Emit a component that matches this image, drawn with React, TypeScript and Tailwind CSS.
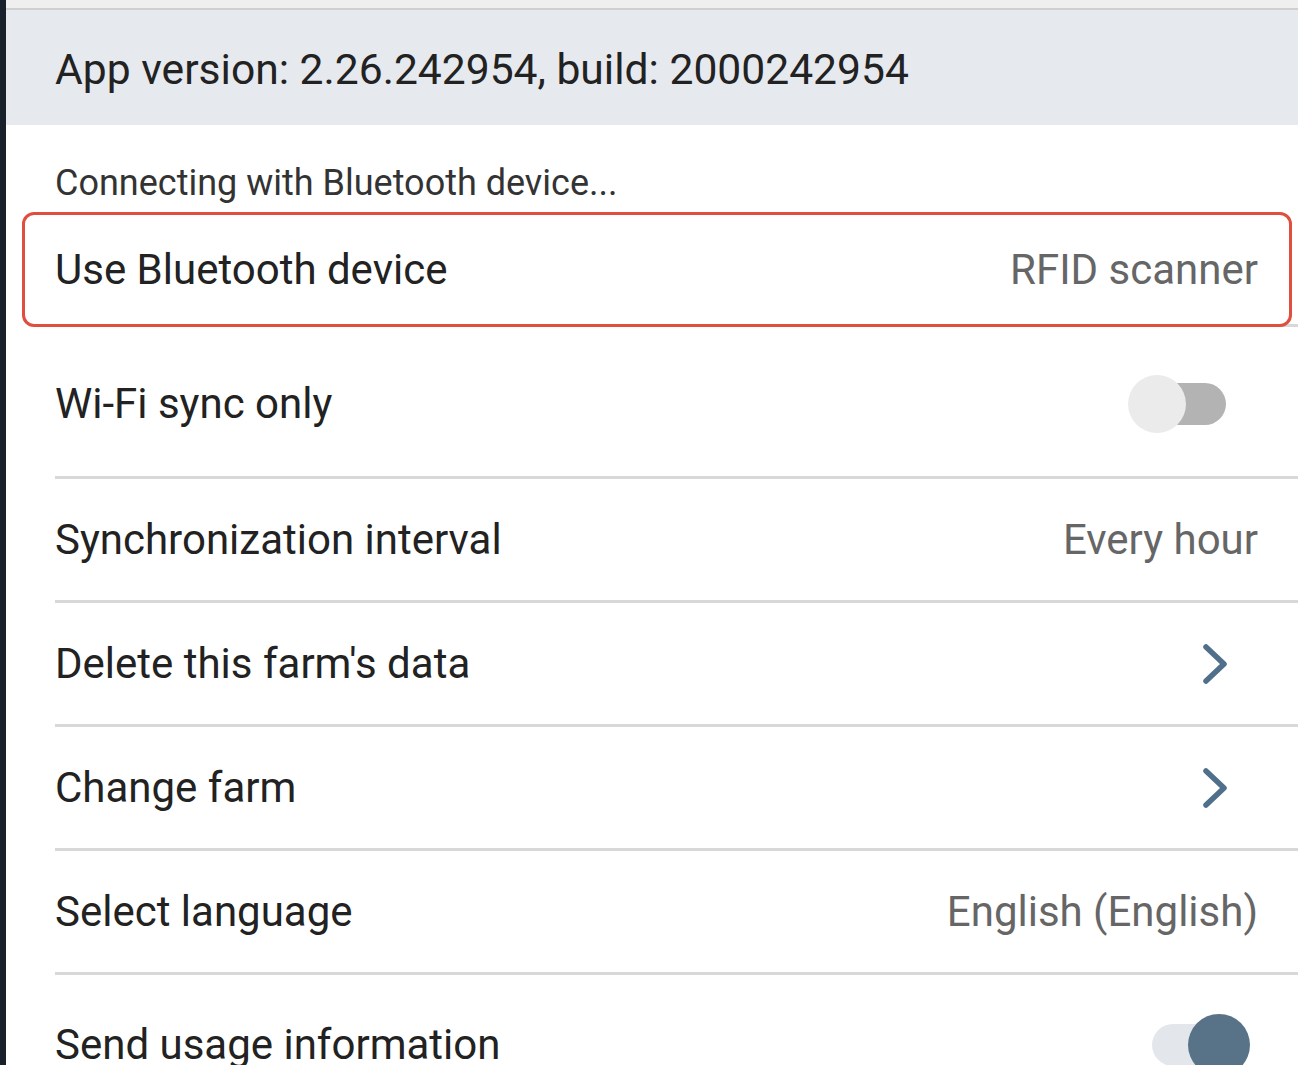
import React from 'react';

const font = { fontFamily: 'Roboto, "Noto Sans", Arial, sans-serif' };

function Chevron() {
  return (
    <svg width="30" height="46" viewBox="0 0 30 46" className="mr-[68px]">
      <path d="M6 6 L24 23 L6 40" fill="none" stroke="#4f6f8a" strokeWidth="5.5" strokeLinecap="round" strokeLinejoin="round" />
    </svg>
  );
}

function Toggle({ on }: { on: boolean }) {
  if (on) {
    return (
      <div className="flex items-center mr-[48px]">
        <div className="w-[78px] h-[42px] rounded-full bg-[#e3e7ec]" />
        <div className="w-[62px] h-[62px] rounded-full bg-[#587387] -ml-[42px]" />
      </div>
    );
  }
  return (
    <div className="flex items-center mr-[72px]">
      <div className="w-[58px] h-[58px] rounded-full bg-[#ebebeb] z-10" />
      <div className="w-[70px] h-[42px] rounded-r-full bg-[#b3b3b3] -ml-[30px]" />
    </div>
  );
}

function Divider() {
  return <div className="h-[3px] ml-[49px] bg-[#d8d8d8]" />;
}

function Label({ children }: { children: React.ReactNode }) {
  return <span className="text-[42px] text-[#222] leading-none">{children}</span>;
}

function Value({ children }: { children: React.ReactNode }) {
  return <span className="text-[42px] text-[#666] leading-none mr-[40px]">{children}</span>;
}

export default function App() {
  return (
    <div className="flex w-full h-[1065px] overflow-hidden bg-white" style={font}>
      <div className="w-[6px] bg-[#18202c] shrink-0" />
      <div className="flex-1 min-w-0">
        <div className="h-[8px] bg-[#efefef]" />
        <div className="h-[2px] bg-[#cfcfcf]" />
        <div className="h-[115px] bg-[#e6e9ee] flex items-center pl-[49px] pt-[4px]">
          <span className="text-[42.6px] text-[#222] leading-none">App version: 2.26.242954, build: 2000242954</span>
        </div>
        <div className="h-[87px] flex items-center pt-[28px] pl-[49px]">
          <span className="text-[36px] text-[#333] leading-none">Connecting with Bluetooth device...</span>
        </div>
        <div className="relative z-10 bg-white ml-[16px] mr-[6px] h-[115px] border-[3px] border-[#e04e3f] rounded-[12px] flex items-center justify-between pl-[30px] pr-[31px]">
          <Label>Use Bluetooth device</Label>
          <span className="text-[42px] text-[#666] leading-none">RFID scanner</span>
        </div>
        <div className="h-[3px] -mt-[3px] ml-[49px] bg-[#d8d8d8]" />
        <div className="flex items-center justify-between pl-[49px] h-[149px] pt-[4px]">
          <Label>Wi-Fi sync only</Label>
          <Toggle on={false} />
        </div>
        <Divider />
        <div className="flex items-center justify-between pl-[49px] h-[121px]">
          <Label>Synchronization interval</Label>
          <Value>Every hour</Value>
        </div>
        <Divider />
        <div className="flex items-center justify-between pl-[49px] h-[121px]">
          <Label>Delete this farm's data</Label>
          <Chevron />
        </div>
        <Divider />
        <div className="flex items-center justify-between pl-[49px] h-[121px]">
          <Label>Change farm</Label>
          <Chevron />
        </div>
        <Divider />
        <div className="flex items-center justify-between pl-[49px] h-[121px]">
          <Label>Select language</Label>
          <Value>English (English)</Value>
        </div>
        <Divider />
        <div className="flex items-center justify-between pl-[49px] h-[140px]">
          <Label>Send usage information</Label>
          <Toggle on={true} />
        </div>
      </div>
    </div>
  );
}
